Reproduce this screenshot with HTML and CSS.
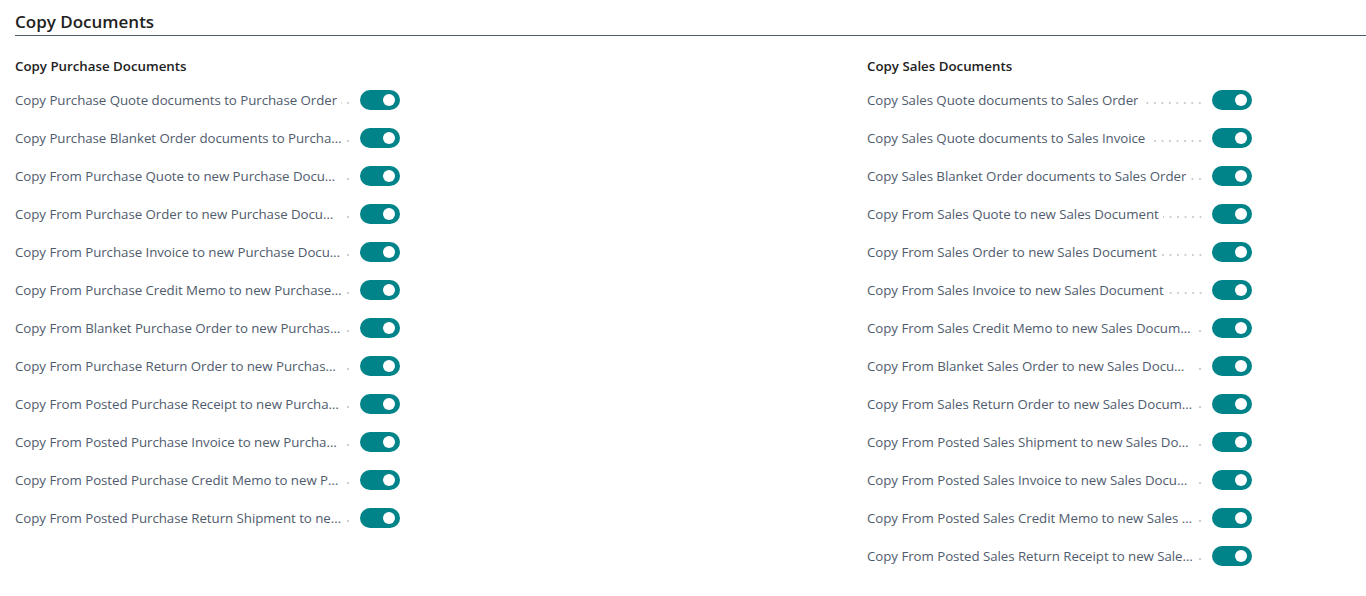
FILE: index.html
```html
<!DOCTYPE html>
<html lang="en">
<head>
<meta charset="utf-8">
<title>Copy Documents</title>
<link rel="stylesheet" href="styles.css">
</head>
<body>
<div class="page">
  <h1 class="title">Copy Documents</h1>
  <div class="groups">
    <section class="group">
      <h2 class="group-title">Copy Purchase Documents</h2>
      <div class="row"><div class="label"><span class="text">Copy Purchase Quote documents to Purchase Order</span><span class="leader"></span></div><span class="toggle"></span></div>
      <div class="row"><div class="label"><span class="text">Copy Purchase Blanket Order documents to Purchase Order</span><span class="leader"></span></div><span class="toggle"></span></div>
      <div class="row"><div class="label"><span class="text">Copy From Purchase Quote to new Purchase Document</span><span class="leader"></span></div><span class="toggle"></span></div>
      <div class="row"><div class="label"><span class="text">Copy From Purchase Order to new Purchase Document</span><span class="leader"></span></div><span class="toggle"></span></div>
      <div class="row"><div class="label"><span class="text">Copy From Purchase Invoice to new Purchase Document</span><span class="leader"></span></div><span class="toggle"></span></div>
      <div class="row"><div class="label"><span class="text">Copy From Purchase Credit Memo to new Purchase Document</span><span class="leader"></span></div><span class="toggle"></span></div>
      <div class="row"><div class="label"><span class="text">Copy From Blanket Purchase Order to new Purchase Document</span><span class="leader"></span></div><span class="toggle"></span></div>
      <div class="row"><div class="label"><span class="text">Copy From Purchase Return Order to new Purchase Document</span><span class="leader"></span></div><span class="toggle"></span></div>
      <div class="row"><div class="label"><span class="text">Copy From Posted Purchase Receipt to new Purchase Document</span><span class="leader"></span></div><span class="toggle"></span></div>
      <div class="row"><div class="label"><span class="text">Copy From Posted Purchase Invoice to new Purchase Document</span><span class="leader"></span></div><span class="toggle"></span></div>
      <div class="row"><div class="label"><span class="text">Copy From Posted Purchase Credit Memo to new Purchase Document</span><span class="leader"></span></div><span class="toggle"></span></div>
      <div class="row"><div class="label"><span class="text">Copy From Posted Purchase Return Shipment to new Purchase Document</span><span class="leader"></span></div><span class="toggle"></span></div>
    </section>
    <section class="group">
      <h2 class="group-title">Copy Sales Documents</h2>
      <div class="row"><div class="label"><span class="text">Copy Sales Quote documents to Sales Order</span><span class="leader"></span></div><span class="toggle"></span></div>
      <div class="row"><div class="label"><span class="text">Copy Sales Quote documents to Sales Invoice</span><span class="leader"></span></div><span class="toggle"></span></div>
      <div class="row"><div class="label"><span class="text">Copy Sales Blanket Order documents to Sales Order</span><span class="leader"></span></div><span class="toggle"></span></div>
      <div class="row"><div class="label"><span class="text">Copy From Sales Quote to new Sales Document</span><span class="leader"></span></div><span class="toggle"></span></div>
      <div class="row"><div class="label"><span class="text">Copy From Sales Order to new Sales Document</span><span class="leader"></span></div><span class="toggle"></span></div>
      <div class="row"><div class="label"><span class="text">Copy From Sales Invoice to new Sales Document</span><span class="leader"></span></div><span class="toggle"></span></div>
      <div class="row"><div class="label"><span class="text">Copy From Sales Credit Memo to new Sales Document</span><span class="leader"></span></div><span class="toggle"></span></div>
      <div class="row"><div class="label"><span class="text">Copy From Blanket Sales Order to new Sales Document</span><span class="leader"></span></div><span class="toggle"></span></div>
      <div class="row"><div class="label"><span class="text">Copy From Sales Return Order to new Sales Document</span><span class="leader"></span></div><span class="toggle"></span></div>
      <div class="row"><div class="label"><span class="text">Copy From Posted Sales Shipment to new Sales Document</span><span class="leader"></span></div><span class="toggle"></span></div>
      <div class="row"><div class="label"><span class="text">Copy From Posted Sales Invoice to new Sales Document</span><span class="leader"></span></div><span class="toggle"></span></div>
      <div class="row"><div class="label"><span class="text">Copy From Posted Sales Credit Memo to new Sales Document</span><span class="leader"></span></div><span class="toggle"></span></div>
      <div class="row"><div class="label"><span class="text">Copy From Posted Sales Return Receipt to new Sales Document</span><span class="leader"></span></div><span class="toggle"></span></div>
    </section>
  </div>
</div>
</body>
</html>
```

FILE: styles.css
```css
* { box-sizing: border-box; }

html, body {
  margin: 0;
  padding: 0;
  background: #ffffff;
}

body {
  font-family: "Open Sans", "Noto Sans", "Liberation Sans", sans-serif;
  color: #505c6d;
}

.page {
  padding-left: 15px;
}

.title {
  margin: 0;
  padding: 10px 0 1px 0;
  font-size: 17px;
  line-height: 24px;
  font-weight: 600;
  color: #212121;
  border-bottom: 1px solid #505c6d;
}

.groups {
  display: grid;
  grid-template-columns: 852px 1fr;
  margin-top: 18px;
}

.group-title {
  margin: 0 0 3px 0;
  font-size: 13.3px;
  line-height: 24px;
  font-weight: 600;
  color: #212121;
}

.row {
  display: flex;
  align-items: center;
  height: 38px;
}

.label {
  display: flex;
  align-items: center;
  width: 337px;
  margin-right: 8px;
  font-size: 13.3px;
  line-height: 20px;
  letter-spacing: -0.05px;
  color: #505c6d;
}

.text {
  flex: 0 1 auto;
  min-width: 0;
  white-space: nowrap;
  overflow: hidden;
  text-overflow: ellipsis;
}

.leader {
  flex: 1 0 6px;
  height: 4px;
  margin-left: 4px;
  margin-top: 6px;
  background-image: radial-gradient(circle, #cfcfcf 0.9px, transparent 1.3px);
  background-size: 7.5px 4px;
  background-position: right center;
  background-repeat: repeat-x;
}

.toggle {
  position: relative;
  flex: 0 0 40px;
  width: 40px;
  height: 20px;
  border-radius: 10px;
  background: #008489;
}

.toggle::after {
  content: "";
  position: absolute;
  top: 4px;
  right: 5px;
  width: 12px;
  height: 12px;
  border-radius: 50%;
  background: #ffffff;
}
```
